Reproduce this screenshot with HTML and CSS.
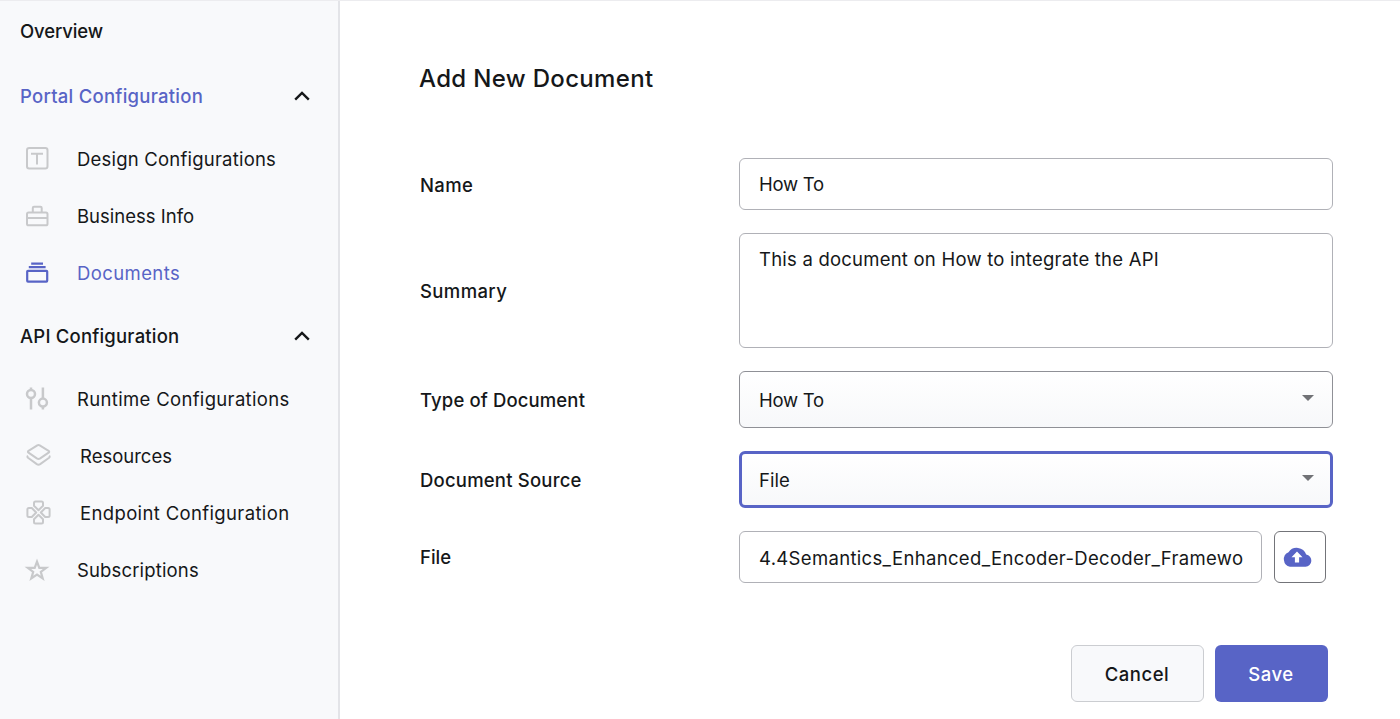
FILE: index.html
```html
<!DOCTYPE html>
<html lang="en">
<head>
<meta charset="utf-8">
<title>Add New Document</title>
<link rel="stylesheet" href="styles.css">
</head>
<body>
<div class="app">
  <nav class="sidebar">
    <a class="overview"><span class="t-overview">Overview</span></a>
    <div class="group active"><span class="t-portal">Portal Configuration</span>
      <svg class="chevron" viewBox="0 0 18 12"><path d="M2.2 9.6 9 2.9l6.8 6.7"/></svg></div>
    <a class="item"><svg class="icon" viewBox="0 0 28 28"><rect x="3" y="3" width="20.500" height="20.500" rx="2.200"/><path d="M7 8.700h12M13 8.700v10.800"/></svg><span class="t-design">Design Configurations</span></a>
    <a class="item"><svg class="icon" viewBox="0 0 28 28"><rect x="3" y="10.500" width="20.500" height="12.800" rx="1.600"/><path d="M8.800 10.200V6q0-1.200 1.200-1.200h6.500q1.200 0 1.200 1.200v4.200M3 16h20"/></svg><span class="t-business">Business Info</span></a>
    <a class="item active"><svg class="icon" viewBox="0 0 28 28"><rect x="3.200" y="11.800" width="20" height="10.800" rx=".8"/><path d="M7.200 4.700h11.800M4.800 8.100h16.800"/></svg><span class="t-documents">Documents</span></a>
    <div class="group"><span class="t-api">API Configuration</span>
      <svg class="chevron" viewBox="0 0 18 12"><path d="M2.200 9.600 9 2.900l6.800 6.700"/></svg></div>
    <a class="item"><svg class="icon thick" viewBox="0 0 28 28"><circle cx="7" cy="9" r="4"/><circle cx="18.900" cy="17.600" r="4"/><path d="M7 2.500V5M7 13v11.500M18.900 2.500v11M18.900 21.600v2.900"/></svg><span class="t-runtime">Runtime Configurations</span></a>
    <a class="item wide"><svg class="icon" viewBox="0 0 28 28"><path d="M13.300 3.400q1.200-.6 2.400 0l8.900 5.500q1.200.8 0 1.700l-8.400 5.800q-1.700 1-3.400 0l-8.300-5.800q-1.200-.9 0-1.700zM4 13.800q-1.100 1.100 0 2l8.800 6.300q1.700 1.100 3.400 0l8.900-6.300q1.100-.9 0-2"/></svg><span class="t-resources">Resources</span></a>
    <a class="item wide"><svg class="icon" viewBox="0 0 28 28"><path d="M14.500 11.200 10 6.800V3.900q0-1.500 1.500-1.500h6q1.500 0 1.500 1.500v2.900zM14.500 15.800l4.500 4.400v2.900q0 1.500-1.500 1.500h-6q-1.500 0-1.500-1.500v-2.900zM12.200 13.500 7.800 18H4.900q-1.500 0-1.500-1.500v-6Q3.400 9 4.900 9h2.900zM16.800 13.500 21.200 9h2.900q1.500 0 1.500 1.500v6q0 1.500-1.500 1.500h-2.900z"/></svg><span class="t-endpoint">Endpoint Configuration</span></a>
    <a class="item"><svg class="icon" viewBox="0 0 28 28"><path class="star" d="m13 5.600 2.300 6.200h6.900l-5.400 4.100 1.900 6.500-5.700-3.800-5.700 3.800 1.900-6.500-5.400-4.100h6.900z"/></svg><span class="t-subs">Subscriptions</span></a>
  </nav>
  <main class="content">
    <h1>Add New Document</h1>
    <form class="form">
      <div class="row name"><label class="l-name">Name</label><div class="field t-howto">How To</div></div>
      <div class="row summary"><label class="l-name">Summary</label><div class="field t-summary">This a document on How to integrate the API</div></div>
      <div class="row select"><label class="l-type">Type of Document</label><div class="field t-howto"><span>How To</span><i class="arrow"></i></div></div>
      <div class="row select focus"><label class="l-source">Document Source</label><div class="field"><span>File</span><i class="arrow"></i></div></div>
      <div class="row file"><label>File</label><div class="field"><span class="filename">4.4Semantics_Enhanced_Encoder-Decoder_Framewo</span></div>
        <div class="upload"><svg viewBox="0 0 30 22"><path class="cloud" d="M24.200 8.500A10 10 0 0 0 6.500 6.200 7.700 7.700 0 0 0 8 20.800h15.500a6.200 6.200 0 0 0 .7-12.300z"/><path class="up" d="M15 5.500 9.500 11.300h3.400v5.200h4.200v-5.200h3.400z"/></svg></div></div>
      <div class="actions"><div class="btn cancel">Cancel</div><div class="btn save">Save</div></div>
    </form>
  </main>
</div>
</body>
</html>
```
FILE: styles.css
```css
* { box-sizing: border-box; }
body { margin: 0; background: #fff; color: #151719; font: 400 18.5px "Inter", "Liberation Sans", sans-serif; }
.app { display: flex; height: 719px; overflow: hidden; border-top: 1px solid #ececef; }
.sidebar { width: 340px; flex: none; background: #f8f9fb; border-right: 2px solid #e3e4e8; white-space: nowrap; }
.overview { display: flex; align-items: center; height: 60px; padding-left: 20px; font-weight: 500; }
.group { display: flex; align-items: center; justify-content: space-between; height: 69px; padding: 0 27px 0 20px; font-weight: 500; }
.active { color: #5864c6; }
.chevron { width: 18px; height: 12px; fill: none; stroke: #151719; stroke-width: 2.4; }
.item { display: flex; align-items: center; height: 57px; padding-left: 24px; gap: 25px; }
.item.wide { gap: 28px; }
.icon { width: 28px; height: 28px; flex: none; fill: none; stroke: #c8c9cb; stroke-width: 2; stroke-linejoin: round; }
.icon.thick { stroke-width: 2.5; }
.star { stroke-width: 2.2; stroke-linejoin: miter; }
.item.active .icon { stroke: #5864c6; stroke-width: 2.2; }
.t-overview { letter-spacing: -.12px; }
.t-portal { letter-spacing: .26px; }
.t-design { letter-spacing: .21px; }
.t-documents { letter-spacing: .4px; }
.t-api { letter-spacing: .2px; }
.t-runtime { letter-spacing: .33px; }
.t-endpoint { letter-spacing: .36px; }
.t-subs { letter-spacing: .15px; }
.content { flex: 1; padding: 62px 67px 0 80px; }
h1 { margin: 0 0 0 -1px; height: 32px; line-height: 32px; font-size: 24px; font-weight: 500; letter-spacing: .33px; white-space: nowrap; }
.form { display: flex; flex-direction: column; gap: 23px; padding-top: 63px; }
.row { display: flex; align-items: center; height: 52px; }
.row label { width: 319px; flex: none; font-weight: 500; }
.row .l-name { letter-spacing: .38px; padding-top: 1px; }
.row .l-type { letter-spacing: .13px; }
.row .l-source { letter-spacing: .2px; }
.field { flex: 1; height: 100%; display: flex; align-items: center; padding: 0 19px; border: 1px solid #b0b1b7; border-radius: 6px; white-space: nowrap; min-width: 0; }
.t-howto { letter-spacing: -.25px; }
.t-summary { letter-spacing: .22px; }
.row.summary { height: 115px; }
.summary .field { align-items: flex-start; padding-top: 14px; }
.row.select { height: 57px; }
.select .field { justify-content: space-between; padding-right: 18px; background: linear-gradient(#fff, #f7f8fa); border-color: #8f9096; }
.select.focus .field { border: 3px solid #5864c6; padding: 0 16px 0 17px; }
.arrow { border: 6px solid transparent; border-top: 6px solid #717276; border-bottom: 0; margin-top: -4px; }
.row.file .field { flex: none; width: 523px; }
.filename { letter-spacing: .33px; padding-top: 2px; }
.upload { width: 52px; height: 52px; margin-left: 12px; border: 1px solid #737479; border-radius: 6px; display: flex; align-items: center; padding-left: 7px; }
.upload svg { width: 30px; height: 22px; }
.cloud { fill: #5864c6; }
.up { fill: #fff; }
.actions { display: flex; justify-content: flex-end; gap: 11px; padding: 39px 5.5px 0 0; }
.btn { height: 57px; display: flex; align-items: center; justify-content: center; border-radius: 6px; font-weight: 500; letter-spacing: .5px; }
.cancel { width: 133px; background: #f8f9fb; border: 1px solid #cbcdd1; }
.save { width: 113px; background: #5864c6; color: #fff; }
```
